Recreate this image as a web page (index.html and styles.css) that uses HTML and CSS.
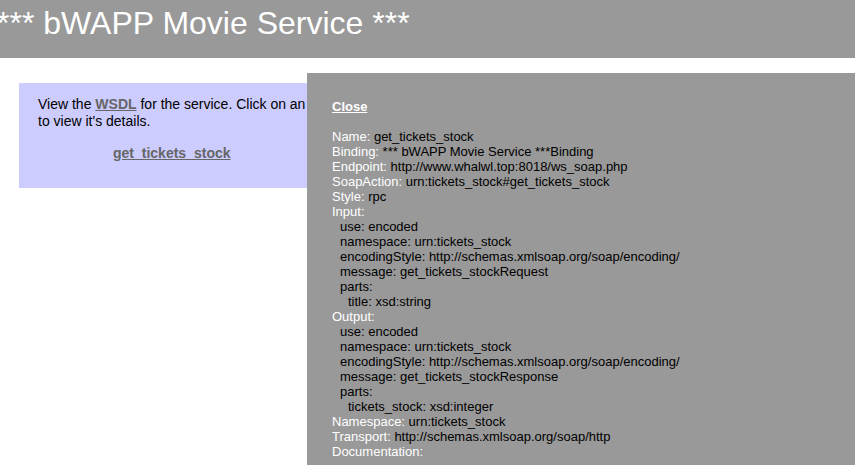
FILE: index.html
```html
<!DOCTYPE html>
<html>
<head>
<meta charset="utf-8">
<title>bWAPP Movie Service</title>
<link rel="stylesheet" href="styles.css">
</head>
<body>
<div class="title">*** bWAPP Movie Service ***</div>
<div class="nav">
  <p class="intro">View the <a class="link" href="#">WSDL</a> for the service. Click on an operation name to view it's details.</p>
  <ul class="ops">
    <li><a class="link" href="#">get_tickets_stock</a></li>
  </ul>
</div>
<div class="hidden">
  <a class="close" href="#">Close</a>
  <div class="spacer"></div>
  <div class="row"><span class="lbl">Name:</span> get_tickets_stock</div>
  <div class="row"><span class="lbl">Binding:</span> *** bWAPP Movie Service ***Binding</div>
  <div class="row"><span class="lbl">Endpoint:</span> http://www.whalwl.top:8018/ws_soap.php</div>
  <div class="row"><span class="lbl">SoapAction:</span> urn:tickets_stock#get_tickets_stock</div>
  <div class="row"><span class="lbl">Style:</span> rpc</div>
  <div class="row"><span class="lbl">Input:</span></div>
  <div class="row i1">use: encoded</div>
  <div class="row i1">namespace: urn:tickets_stock</div>
  <div class="row i1">encodingStyle: http://schemas.xmlsoap.org/soap/encoding/</div>
  <div class="row i1">message: get_tickets_stockRequest</div>
  <div class="row i1">parts:</div>
  <div class="row i2">title: xsd:string</div>
  <div class="row"><span class="lbl">Output:</span></div>
  <div class="row i1">use: encoded</div>
  <div class="row i1">namespace: urn:tickets_stock</div>
  <div class="row i1">encodingStyle: http://schemas.xmlsoap.org/soap/encoding/</div>
  <div class="row i1">message: get_tickets_stockResponse</div>
  <div class="row i1">parts:</div>
  <div class="row i2">tickets_stock: xsd:integer</div>
  <div class="row"><span class="lbl">Namespace:</span> urn:tickets_stock</div>
  <div class="row"><span class="lbl">Transport:</span> http://schemas.xmlsoap.org/soap/http</div>
  <div class="row"><span class="lbl">Documentation:</span></div>
</div>
</body>
</html>
```
FILE: styles.css
```css
html, body {
  height: 100%;
  overflow: hidden;
}
body {
  margin: 0;
  font-family: "Liberation Sans", Arial, sans-serif;
  color: #000000;
  background-color: #ffffff;
  position: relative;
}
.title {
  box-sizing: border-box;
  height: 58px;
  padding-top: 5px;
  font-size: 32px;
  line-height: 37px;
  color: #ffffff;
  background-color: #999999;
  text-indent: -3px;
  white-space: nowrap;
}
.nav {
  width: 384px;
  margin: 25px 0 0 19px;
  padding: 13px 19px 26px 19px;
  background-color: #ccccff;
  font-size: 14px;
  line-height: 17px;
}
.intro {
  margin: 0;
}
.ops {
  list-style: none;
  margin: 15px 0 0 0;
  padding: 0 0 0 75px;
}
.link {
  color: #666666;
  font-weight: bold;
}
.hidden {
  position: absolute;
  left: 307px;
  right: 0;
  top: 73px;
  bottom: -40px;
  padding: 26px 25px 25px 25px;
  background-color: #999999;
  font-size: 13px;
  line-height: 15px;
  overflow: hidden;
  white-space: nowrap;
}
.close {
  color: #ffffff;
  font-weight: bold;
}
.spacer {
  height: 15px;
}
.lbl {
  color: #ffffff;
}
.i1 {
  padding-left: 8px;
}
.i2 {
  padding-left: 16px;
}
```
